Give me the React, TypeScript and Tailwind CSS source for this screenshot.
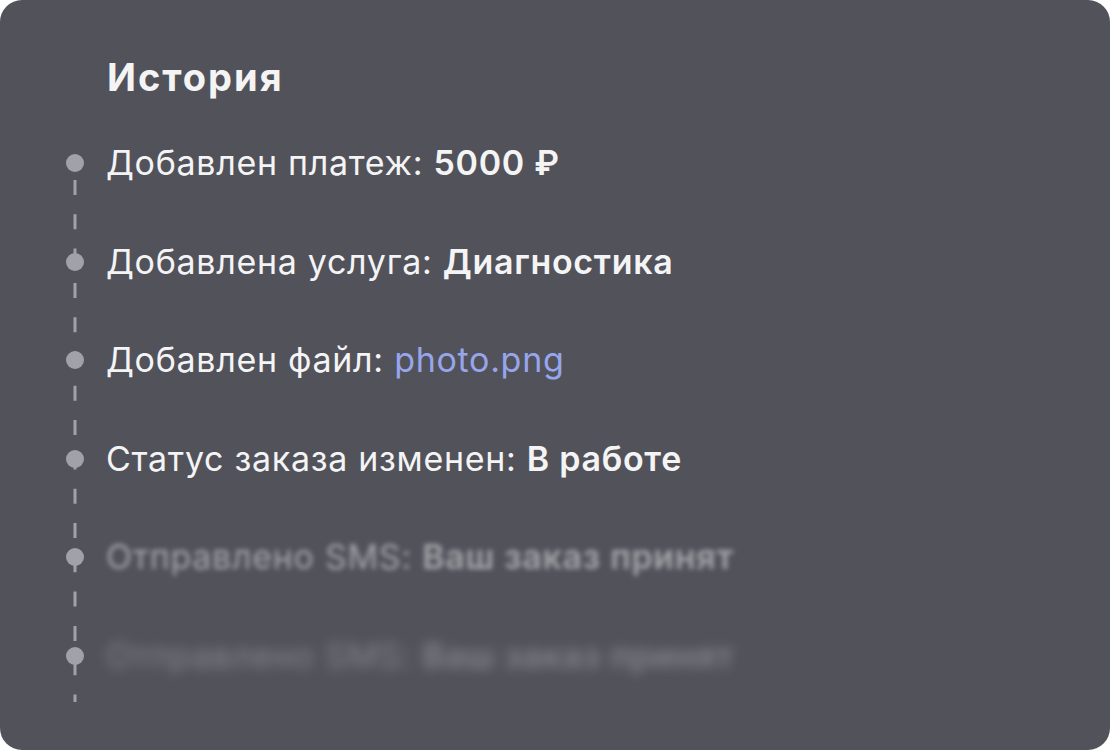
const events = [
    { label: "Добавлен платеж:", value: "5000 ₽", kind: "bold" },
    { label: "Добавлена услуга:", value: "Диагностика", kind: "bold" },
    { label: "Добавлен файл:", value: "photo.png", kind: "link" },
    { label: "Статус заказа изменен:", value: "В работе", kind: "bold" },
    { label: "Отправлено SMS:", value: "Ваш заказ принят", kind: "bold", blur: "blur-[2.5px] opacity-50" },
    { label: "Отправлено SMS:", value: "Ваш заказ принят", kind: "bold", blur: "blur-[6px] opacity-30" },
]

export default function App() {
    return (
        <div className="w-[1110px] h-[750px] bg-white" style={{ fontFamily: "Inter, 'Noto Sans', sans-serif" }}>
            <div className="w-full h-full rounded-[22px] bg-[#52525b] pl-[66px] pt-[55px] overflow-hidden">
                <h2 className="ml-[41px] text-[38px] leading-[44px] tracking-[2px] font-bold text-[#f4f4f5]">История</h2>

                <div className="relative mt-[44px]">
                    {/* dashed line behind the dots */}
                    <svg className="absolute left-[7px] top-[29px]" width="4" height="530">
                        <line x1="2" y1="8" x2="2" y2="557" stroke="#a1a1aa" strokeWidth="3" strokeDasharray="15 19.3" />
                    </svg>
                    <ul className="relative flex flex-col gap-[58.6px]">
                        {events.map((e, i) => (
                            <li key={i} className="flex items-center h-10">
                                <span className="size-[18px] shrink-0 rounded-full bg-[#a1a1aa]" />
                                <p className={`ml-[22px] text-[34px] leading-10 tracking-[0.7px] text-[#f4f4f5] whitespace-nowrap ${e.blur ?? ""}`}>
                                    {e.label}{" "}
                                    {e.kind === "link" ? (
                                        <span className="text-[#97a6ea]">{e.value}</span>
                                    ) : (
                                        <span className="font-semibold">{e.value}</span>
                                    )}
                                </p>
                            </li>
                        ))}
                    </ul>
                </div>
            </div>
        </div>
    )
}
